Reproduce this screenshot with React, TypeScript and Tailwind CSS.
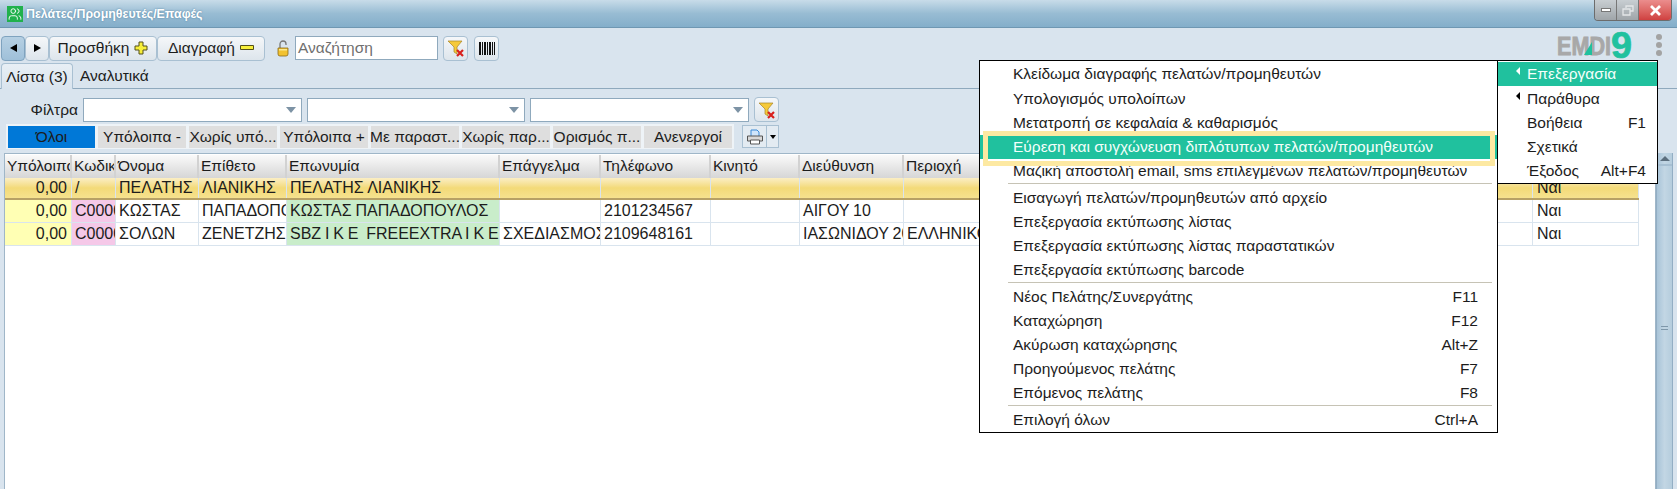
import { Users } from 'lucide-react';

const columns = [
  { title: 'Υπόλοιπο', width: 67 },
  { title: 'Κωδικός', width: 44 },
  { title: 'Όνομα', width: 83 },
  { title: 'Επίθετο', width: 88 },
  { title: 'Επωνυμία', width: 213 },
  { title: 'Επάγγελμα', width: 101 },
  { title: 'Τηλέφωνο', width: 110 },
  { title: 'Κινητό', width: 89 },
  { title: 'Διεύθυνση', width: 104 },
  { title: 'Περιοχή', width: 107 },
  { title: '', width: 522 },
  { title: '', width: 106 },
];

const rows = [
  ['0,00', '/', 'ΠΕΛΑΤΗΣ', 'ΛΙΑΝΙΚΗΣ', 'ΠΕΛΑΤΗΣ ΛΙΑΝΙΚΗΣ', '', '', '', '', '', '', 'Ναι'],
  ['0,00', 'C00001', 'ΚΩΣΤΑΣ', 'ΠΑΠΑΔΟΠΟΥΛΟΣ', 'ΚΩΣΤΑΣ ΠΑΠΑΔΟΠΟΥΛΟΣ', '', '2101234567', '', 'ΑΙΓΟΥ 10', '', '', 'Ναι'],
  ['0,00', 'C00002', 'ΣΟΛΩΝ', 'ΖΕΝΕΤΖΗΣ', 'SBZ I K E  FREEEXTRA I K E', 'ΣΧΕΔΙΑΣΜΟΣ', '2109648161', '', 'ΙΑΣΩΝΙΔΟΥ 20', 'ΕΛΛΗΝΙΚΟ', '', 'Ναι'],
];

const quickFilters = ['Υπόλοιπα -', 'Χωρίς υπό...', 'Υπόλοιπα +', 'Με παραστ...', 'Χωρίς παρ...', 'Ορισμός π...', 'Ανενεργοί'];

const menuGroups = [
  {
    rowClass: 'h-[24.2px]',
    items: [
      ['Κλείδωμα διαγραφής πελατών/προμηθευτών', ''],
      ['Υπολογισμός υπολοίπων', ''],
      ['Μετατροπή σε κεφαλαία & καθαρισμός', ''],
      ['Εύρεση και συγχώνευση διπλότυπων πελατών/προμηθευτών', ''],
      ['Μαζική αποστολή email, sms επιλεγμένων πελατών/προμηθευτών', ''],
    ],
  },
  {
    rowClass: 'h-6',
    items: [
      ['Εισαγωγή πελατών/προμηθευτών από αρχείο', ''],
      ['Επεξεργασία εκτύπωσης λίστας', ''],
      ['Επεξεργασία εκτύπωσης λίστας παραστατικών', ''],
      ['Επεξεργασία εκτύπωσης barcode', ''],
    ],
  },
  {
    rowClass: 'h-6',
    items: [
      ['Νέος Πελάτης/Συνεργάτης', 'F11'],
      ['Καταχώρηση', 'F12'],
      ['Ακύρωση καταχώρησης', 'Alt+Z'],
      ['Προηγούμενος πελάτης', 'F7'],
      ['Επόμενος πελάτης', 'F8'],
    ],
  },
  { rowClass: 'h-6', items: [['Επιλογή όλων', 'Ctrl+A']] },
];

const sideMenu = [
  { label: 'Επεξεργασία', key: '', arrow: true, active: true },
  { label: 'Παράθυρα', key: '', arrow: true, active: false },
  { label: 'Βοήθεια', key: 'F1', arrow: false, active: false },
  { label: 'Σχετικά', key: '', arrow: false, active: false },
  { label: 'Έξοδος', key: 'Alt+F4', arrow: false, active: false },
];

function FilterIcon() {
  return (
    <svg width="18" height="18" viewBox="0 0 18 18">
      <path d="M1 2h14L10 8v7l-3-2V8z" fill="#f5c93a" stroke="#a8842a" strokeWidth="0.7" />
      <path d="M10 11l6 6M16 11l-6 6" stroke="#d8201c" strokeWidth="2.2" />
    </svg>
  );
}

function Combo({ width }: { width: string }) {
  return (
    <div className={`${width} flex h-6 items-center justify-end border border-[#8fa9bd] bg-white pr-[5px]`}>
      <div className="h-0 w-0 border-x-[5px] border-t-[6px] border-x-transparent border-t-[#7d93a5]" />
    </div>
  );
}

export default function App() {
  return (
    <div className="relative flex h-[489px] w-[1677px] flex-col overflow-hidden bg-[#d9e4ee] font-['Liberation_Sans',Arial,sans-serif] text-[15.5px] text-[#1c1c1c]">
      {/* Title bar */}
      <div className="flex h-[28px] shrink-0 items-start justify-between border-b border-[#6f97b2] bg-gradient-to-b from-[#c8dce9] via-[#98bcd3] to-[#84aeca] pl-[7px] pr-[5px]">
        <div className="mt-[5px] flex items-center gap-[3px]">
          <div className="flex h-4 w-4 items-center justify-center bg-[#20b14c]">
            <Users size={14} color="white" strokeWidth={1.6} />
          </div>
          <span className="text-[12.4px] font-bold text-white [text-shadow:0_0_2px_#4d7f9f]">Πελάτες/Προμηθευτές/Επαφές</span>
        </div>
        <div className="flex h-[21px] overflow-hidden rounded-b-[4px] border border-t-0 border-[#6c6c6c]">
          <div className="flex w-[22px] items-center justify-center border-r border-[#777] bg-gradient-to-b from-[#c8ced2] to-[#9fa5a9]">
            <div className="h-[4px] w-[10px] border border-[#777] bg-white" />
          </div>
          <div className="flex w-[22px] items-center justify-center border-r border-[#777] bg-gradient-to-b from-[#c8ced2] to-[#9fa5a9]">
            <svg width="12" height="11" viewBox="0 0 12 11" fill="none" stroke="#e4e6e8" strokeWidth="1.3">
              <path d="M4 3V1h7v5H8" />
              <path d="M1 4h7v6H1z" />
            </svg>
          </div>
          <div className="flex w-[32px] items-center justify-center bg-gradient-to-b from-[#eb8d8d] to-[#cf4040]">
            <svg width="13" height="11" viewBox="0 0 13 11" stroke="white" strokeWidth="2.8">
              <path d="M2 1l9 9M11 1l-9 9" />
            </svg>
          </div>
        </div>
      </div>

      {/* Toolbar */}
      <div className="flex h-[35px] shrink-0 items-center pl-px pt-[5px]">
        <button className="flex h-[25px] w-6 items-center justify-center rounded-[4px] border border-[#7fa3bf] bg-gradient-to-b from-[#b6d0e3] to-[#9fc0d9]">
          <div className="h-0 w-0 border-y-[4px] border-r-[7px] border-y-transparent border-r-black" />
        </button>
        <button className="flex h-[25px] w-6 items-center justify-center rounded-[4px] border border-[#a9c0d2] bg-gradient-to-b from-[#f5f7f9] to-[#dde5ec]">
          <div className="h-0 w-0 border-y-[4px] border-l-[7px] border-y-transparent border-l-black" />
        </button>
        <button className="flex h-[25px] w-[108px] items-center justify-center gap-[5px] rounded-[4px] border border-[#a9c0d2] bg-gradient-to-b from-[#f5f7f9] to-[#dde5ec]">
          Προσθήκη
          <svg width="14" height="14" viewBox="0 0 14 14">
            <path d="M5 1h4v4h4v4H9v4H5V9H1V5h4z" fill="#f7ef3a" stroke="#55501a" strokeWidth="1" />
          </svg>
        </button>
        <button className="flex h-[25px] w-[108px] items-center justify-center gap-[5px] rounded-[4px] border border-[#a9c0d2] bg-gradient-to-b from-[#f5f7f9] to-[#dde5ec]">
          Διαγραφή
          <svg width="14" height="6" viewBox="0 0 14 6">
            <path d="M0.5 0.5h13v4H0.5z" fill="#f7ef3a" stroke="#55501a" strokeWidth="1" />
          </svg>
        </button>
        <svg className="ml-[12px]" width="12" height="17" viewBox="0 0 12 17">
          <path d="M3 8V4a3 3 0 0 1 6 0v1" fill="none" stroke="#777" strokeWidth="1.3" />
          <path d="M1 8h10v6a2 2 0 0 1-2 2H3a2 2 0 0 1-2-2z" fill="#f2c230" stroke="#8a6a18" strokeWidth="0.8" />
          <path d="M2 9h8v1.5H2z" fill="#fbe98e" />
        </svg>
        <div className="ml-[6px] flex h-6 w-[143px] items-center border border-[#8fa9bd] bg-white px-[2px] text-[#6f6f6f]">Αναζήτηση</div>
        <button className="ml-[5px] flex h-[25px] w-[25px] items-center justify-center rounded-[4px] border border-[#a9c0d2] bg-gradient-to-b from-[#f5f7f9] to-[#dde5ec]">
          <FilterIcon />
        </button>
        <button className="ml-[6px] flex h-[25px] w-[25px] items-center justify-center rounded-[4px] border border-[#a9c0d2] bg-gradient-to-b from-[#f5f7f9] to-[#dde5ec]">
          <svg width="16" height="13" viewBox="0 0 16 13" fill="#111">
            <path d="M0 0h2v13H0zM3 0h1v13H3zM5 0h2v13H5zM8 0h1v13H8zM10 0h2v13h-2zM13 0h1v13h-1zM15 0h1v13h-1z" />
          </svg>
        </button>
      </div>

      {/* Tabs */}
      <div className="flex h-[26px] shrink-0 items-end border-b border-[#8fa9bd] pl-px">
        <div className="flex h-[26px] w-[72px] -mb-px items-center justify-center rounded-t-[4px] border border-b-0 border-[#a9c0d2] bg-gradient-to-b from-[#e8eff5] to-[#d9e4ee]">Λίστα (3)</div>
        <div className="flex h-[25px] items-center pl-[7px]">Αναλυτικά</div>
      </div>

      {/* Filters */}
      <div className="flex h-[33px] shrink-0 items-center pt-[8px]">
        <span className="w-[78px] text-right">Φίλτρα</span>
        <div className="ml-[5px] flex items-center gap-[5px]">
          <Combo width="w-[219px]" />
          <Combo width="w-[218px]" />
          <Combo width="w-[219px]" />
          <button className="flex h-[25px] w-[25px] items-center justify-center rounded-[4px] border border-[#a9c0d2] bg-gradient-to-b from-[#f5f7f9] to-[#dde5ec]">
            <FilterIcon />
          </button>
        </div>
      </div>

      {/* Quick filter strip */}
      <div className="mt-[2px] flex shrink-0 items-center">
        <div className="ml-[6px] flex h-[25px] w-[728px] items-center gap-[3px] bg-[#eef3f7] pl-[2px]">
          <div className="flex h-[22px] w-[87px] items-center justify-center bg-[#0078d7]">Όλοι</div>
          {quickFilters.map((label) => (
            <div key={label} className="flex h-[22px] w-[88px] items-center justify-center whitespace-nowrap bg-[#dedede]">
              {label}
            </div>
          ))}
        </div>
        <div className="ml-[8px] flex h-[23px] w-[37px] border border-[#a9c0d2]">
          <div className="flex w-[24px] items-center justify-center border-r border-[#a9c0d2] bg-[#e3ebf2]">
            <svg width="18" height="16" viewBox="0 0 18 16">
              <path d="M5 1h6l2 2v5H5z" fill="#cfe5fb" stroke="#3a8ad8" strokeWidth="1" />
              <path d="M1.5 7h15v5h-15z" fill="#d8d8d8" stroke="#555" strokeWidth="1" />
              <path d="M4.5 11h9v4h-9z" fill="#fff" stroke="#555" strokeWidth="1" />
            </svg>
          </div>
          <div className="flex flex-1 items-center justify-center bg-[#e3ebf2]">
            <div className="h-0 w-0 border-x-[3px] border-t-[4px] border-x-transparent border-t-black" />
          </div>
        </div>
      </div>

      {/* List */}
      <div className="mt-[4px] flex min-h-0 flex-1 pl-[4px] pr-[4px]">
        <div className="min-w-0 flex-1 overflow-hidden border border-b-0 border-[#9fb6c8] bg-white pt-px">
          <div className="flex h-[23px] w-fit bg-gradient-to-b from-[#fafafa] to-[#d6d6d6]">
            {columns.map((col, i) => (
              <div
                key={i}
                style={{ width: col.width }}
                className="flex items-center overflow-hidden whitespace-nowrap border-r-2 border-[#d2d2d2] pb-px pl-[2px]"
              >
                {col.title}
              </div>
            ))}
          </div>
          {rows.map((row, r) => (
            <div
              key={r}
              className={
                r === 0
                  ? 'flex h-[22px] w-fit border-b-2 border-[#b7a165] bg-gradient-to-b from-[#fbeec4] via-[#f3da78] to-[#f6e28e] text-[16px]'
                  : 'flex h-[23px] w-fit border-b border-[#d9e4ee] text-[16px] [word-spacing:-0.6px]'
              }
            >
              {row.map((cell, c) => (
                <div
                  key={c}
                  style={{ width: columns[c].width }}
                  className={
                    'flex items-center overflow-hidden whitespace-pre border-r border-[#d9e4ee] ' +
                    (c === 0 ? 'justify-end pr-[4px] ' : 'pl-[3px] ') +
                    (r > 0 && c === 0 ? 'bg-[#ffffb4] ' : '') +
                    (r > 0 && c === 1 ? 'bg-[#f5c8e8] ' : '') +
                    (r > 0 && c === 4 ? 'bg-[#c9edca] ' : '') +
                    (c === 11 ? 'pl-[4px]' : '')
                  }
                >
                  {cell}
                </div>
              ))}
            </div>
          ))}
        </div>
        {/* Scrollbar */}
        <div className="flex w-[17px] shrink-0 flex-col border-x border-[#93aec4] bg-gradient-to-r from-[#a9c4d8] via-[#c2d6e4] to-[#b5cddd]">
          <div className="flex h-[19px] items-center justify-center border-b-2 border-[#a6bfd2]">
            <div className="h-0 w-0 border-x-[5px] border-b-[5px] border-x-transparent border-b-[#5c6f7e]" />
          </div>
          <div className="flex h-[487px] flex-col items-center justify-center gap-[2px]">
            <div className="h-px w-[7px] bg-[#7e97aa]" />
            <div className="h-px w-[7px] bg-[#7e97aa]" />
          </div>
        </div>
      </div>

      {/* Logo */}
      <svg className="absolute left-[1557px] top-[31px]" width="78" height="29" viewBox="0 0 78 29">
        <text x="0" y="24" fontFamily="'Liberation Sans', Arial, sans-serif" fontWeight="700" fontSize="26" textLength="54" lengthAdjust="spacingAndGlyphs" fill="#a8a8a8" stroke="#a8a8a8" strokeWidth="0.9">EMDI</text>
        <path d="M27 24l8-13v13z" fill="#20c19e" />
        <text x="54" y="27" fontFamily="'Liberation Sans', Arial, sans-serif" fontWeight="700" fontSize="36" textLength="21" lengthAdjust="spacingAndGlyphs" fill="#20c19e" stroke="#20c19e" strokeWidth="0.7">9</text>
      </svg>
      <div className="absolute left-[1656px] top-[34px] flex flex-col gap-[2px]">
        <div className="h-[6px] w-[6px] rounded-full bg-[#a3a3a3]" />
        <div className="h-[6px] w-[6px] rounded-full bg-[#a3a3a3]" />
        <div className="h-[6px] w-[6px] rounded-full bg-[#a3a3a3]" />
      </div>

      {/* Options menu */}
      <div className="absolute left-[979px] top-[60px] h-[373px] w-[519px] border border-black bg-white pt-px">
        {menuGroups.map((group, g) => (
          <div key={g}>
            {g > 0 && (
              <div className="flex h-[3px] pl-[28px] pr-[5px]">
                <div className="h-px w-full bg-[#c6c3b5]" />
              </div>
            )}
            {group.items.map(([label, key]) => (
              <div
                key={label}
                className={`${group.rowClass} flex items-center justify-between pl-[33px] pr-[19px] ${label.startsWith('Εύρεση') ? 'bg-[#20c19e] text-[#f4fffb]' : ''}`}
              >
                <span className="whitespace-nowrap">{label}</span>
                <span>{key}</span>
              </div>
            ))}
          </div>
        ))}
        {/* Yellow callout around the highlighted item */}
        <div className="absolute left-[3px] top-[70px] h-[35px] w-[512px] border-[5px] border-[#fde9a2]" />
      </div>

      {/* Main menu */}
      <div className="absolute left-[1497px] top-[60px] h-[124px] w-[161px] border border-black bg-white pt-px">
        {sideMenu.map((item) => (
          <div
            key={item.label}
            className={`flex h-[24.2px] items-center justify-between pl-[29px] pr-[11px] ${item.active ? 'bg-[#20c19e] text-[#f4fffb]' : ''}`}
          >
            <span className="relative">
              {item.arrow && (
                <span
                  className={`absolute left-[-11px] top-[5px] h-0 w-0 border-y-[4px] border-r-[4px] border-y-transparent ${item.active ? 'border-r-white' : 'border-r-black'}`}
                />
              )}
              {item.label}
            </span>
            <span>{item.key}</span>
          </div>
        ))}
      </div>
    </div>
  );
}
